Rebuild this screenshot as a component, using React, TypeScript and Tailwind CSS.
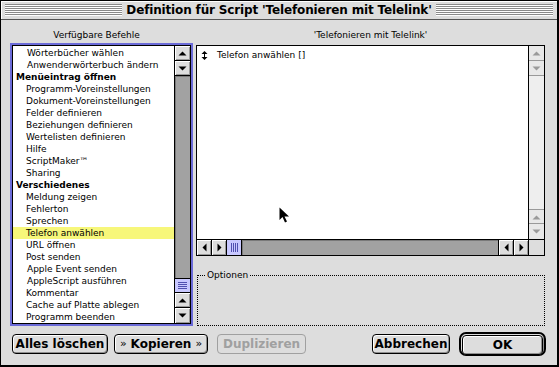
import React from 'react';

const befehle: { text: string; bold?: boolean; selected?: boolean; indent?: number }[] = [
  { text: 'Wörterbücher wählen', indent: 1 },
  { text: 'Anwenderwörterbuch ändern', indent: 1 },
  { text: 'Menüeintrag öffnen', bold: true },
  { text: 'Programm-Voreinstellungen' },
  { text: 'Dokument-Voreinstellungen' },
  { text: 'Felder definieren' },
  { text: 'Beziehungen definieren' },
  { text: 'Wertelisten definieren' },
  { text: 'Hilfe' },
  { text: 'ScriptMaker™' },
  { text: 'Sharing' },
  { text: 'Verschiedenes', bold: true },
  { text: 'Meldung zeigen' },
  { text: 'Fehlerton' },
  { text: 'Sprechen' },
  { text: 'Telefon anwählen', selected: true },
  { text: 'URL öffnen' },
  { text: 'Post senden' },
  { text: 'Apple Event senden', indent: 1 },
  { text: 'AppleScript ausführen', indent: 1 },
  { text: 'Kommentar' },
  { text: 'Cache auf Platte ablegen' },
  { text: 'Programm beenden' },
];

// kleiner Pfeil-Knopf einer Rollleiste
function Pfeil({ dir, off, cls = '' }: { dir: 'up' | 'down' | 'left' | 'right'; off?: boolean; cls?: string }) {
  const pts: Record<string, string> = {
    up: '3.5,9.5 7.5,5.5 11.5,9.5',
    down: '3.5,5.5 7.5,9.5 11.5,5.5',
    left: '9.5,3.5 5.5,7.5 9.5,11.5',
    right: '5.5,3.5 9.5,7.5 5.5,11.5',
  };
  return (
    <div
      className={`w-[15px] h-[15px] shrink-0 ${
        off ? 'bg-[#e8e8e8]' : 'bg-[#dddddd] shadow-[inset_1px_1px_0_#ffffff,inset_-1px_-1px_0_#999999]'
      } ${cls}`}
    >
      <svg width="15" height="15" viewBox="0 0 15 15">
        <polygon points={pts[dir]} fill={off ? '#9a9a9a' : '#000'} />
      </svg>
    </div>
  );
}

function Knopf({ children, off, cls = '' }: { children: React.ReactNode; off?: boolean; cls?: string }) {
  return (
    <div
      className={`h-[20px] flex items-center justify-center rounded-[4px] border text-[12px] font-bold font-['DejaVu_Sans',sans-serif] ${
        off
          ? 'border-[#a0a0a0] text-[#a0a0a0] bg-[#dddddd]'
          : 'border-black text-black bg-[#dddddd] shadow-[inset_1px_1px_0_#ffffff,inset_-1px_-1px_0_#8f8f8f]'
      } ${cls}`}
    >
      {children}
    </div>
  );
}

export default function App() {
  return (
    <div className="w-[559px] h-[367px] bg-[#dddddd] border-l border-t border-black border-r-[2px] border-b-[2px] flex flex-col relative overflow-hidden font-['DejaVu_Sans',sans-serif] text-[9px] text-black">
      {/* Titelleiste */}
      <div className="h-[19px] border-b border-[#555555] flex items-center gap-[4px] px-[4px] bg-[#dddddd] shadow-[inset_1px_1px_0_#ffffff]">
        <div className="flex-1 h-[12px] bg-[repeating-linear-gradient(to_bottom,#8a8a8a_0px,#8a8a8a_1px,#ffffff_1px,#ffffff_2px)]" />
        <div className="text-[12px] font-bold leading-[18px] tracking-[-0.15px] whitespace-nowrap">
          Definition für Script 'Telefonieren mit Telelink'
        </div>
        <div className="flex-1 h-[12px] bg-[repeating-linear-gradient(to_bottom,#8a8a8a_0px,#8a8a8a_1px,#ffffff_1px,#ffffff_2px)]" />
      </div>

      <div className="flex gap-[3px] pl-[9px] pt-[9px]">
        {/* Verfügbare Befehle */}
        <div className="w-[183px] flex flex-col">
          <div className="h-[14px] leading-[12px] text-center pr-[10px]">Verfügbare Befehle</div>
          <div className="h-[283px] border-[2px] border-[#6b6bd8] flex">
            <div className="flex-1 border border-black flex">
              <div className="flex-1 bg-white pt-[1px]">
                {befehle.map((b) => (
                  <div
                    key={b.text}
                    className={`h-[12px] leading-[12px] whitespace-nowrap ${
                      b.bold ? 'font-bold pl-[3px]' : b.indent ? 'pl-[14px]' : 'pl-[13px]'
                    } ${b.selected ? 'bg-[#f7f77a]' : ''}`}
                  >
                    {b.text}
                  </div>
                ))}
              </div>
              <div className="w-[16px] border-l border-black flex flex-col">
                <Pfeil dir="up" cls="border-b border-black" />
                <Pfeil dir="down" cls="border-b border-black" />
                <div className="flex-1 bg-[#a2a2a2] shadow-[inset_1px_1px_0_#7a7a7a]" />
                <div className="h-[15px] border-y border-black bg-[#c8c8ff] flex flex-col justify-center items-center gap-[1px]">
                  {[0, 1, 2, 3].map((i) => (
                    <div key={i} className="w-[9px] h-[1px] bg-[#5050b0]" />
                  ))}
                </div>
                <Pfeil dir="up" cls="border-b border-black" />
                <Pfeil dir="down" />
              </div>
            </div>
          </div>
        </div>

        {/* Script-Inhalt */}
        <div className="w-[349px] flex flex-col">
          <div className="h-[16px] leading-[12px] text-center">'Telefonieren mit Telelink'</div>
          <div className="h-[211px] border border-black flex flex-col">
            <div className="flex-1 flex min-h-0">
              <div className="flex-1 bg-white pt-[3px] pl-[4px]">
                <div className="h-[12px] leading-[12px] flex items-center">
                  <svg width="7" height="9" viewBox="0 0 7 9" className="mr-[9px]">
                    <polygon points="3.5,0 6.5,3 0.5,3" fill="#000" />
                    <rect x="3" y="3" width="1" height="3" fill="#000" />
                    <polygon points="3.5,9 6.5,6 0.5,6" fill="#000" />
                  </svg>
                  <span>Telefon anwählen []</span>
                </div>
              </div>
              <div className="w-[16px] border-l border-black flex flex-col bg-[#ececec]">
                <Pfeil dir="up" off cls="border-b border-[#999999]" />
                <Pfeil dir="down" off cls="border-b border-[#999999]" />
                <div className="flex-1 bg-[#eeeeee]" />
                <Pfeil dir="up" off cls="border-t border-b border-[#999999]" />
                <Pfeil dir="down" off />
              </div>
            </div>
            <div className="h-[16px] border-t border-black flex">
              <Pfeil dir="left" cls="border-r border-black" />
              <Pfeil dir="right" cls="border-r border-black" />
              <div className="w-[15px] border-r border-black bg-[#c8c8ff] flex justify-center items-center gap-[1px]">
                {[0, 1, 2, 3].map((i) => (
                  <div key={i} className="h-[9px] w-[1px] bg-[#5050b0]" />
                ))}
              </div>
              <div className="flex-1 bg-[#a2a2a2] shadow-[inset_1px_1px_0_#7a7a7a] border-r border-black" />
              <Pfeil dir="left" cls="border-r border-black" />
              <Pfeil dir="right" cls="border-r border-black" />
              <div className="w-[15px] bg-[#dddddd]" />
            </div>
          </div>
          {/* Optionen */}
          <div className="relative mt-[19px] ml-[1px] h-[51px] border border-dotted border-black">
            <span className="absolute left-[8px] top-[-7px] bg-[#dddddd] px-[1px] leading-[12px]">Optionen</span>
          </div>
        </div>
      </div>

      {/* Knöpfe */}
      <div className="flex items-center mt-[6px] h-[24px] pl-[11px] pr-[11px]">
        <Knopf cls="w-[96px]">Alles löschen</Knopf>
        <Knopf cls="w-[94px] ml-[6px]">
          <span className="font-normal text-[11px] mr-[4px]">»</span>Kopieren
          <span className="font-normal text-[11px] ml-[4px]">»</span>
        </Knopf>
        <Knopf off cls="w-[89px] ml-[9px]">Duplizieren</Knopf>
        <Knopf cls="w-[78px] ml-auto">Abbrechen</Knopf>
        <div className="ml-[9px] w-[87px] h-[24px] rounded-[7px] border-[2px] border-black p-[1px] bg-[#dddddd] shadow-[inset_-1px_-1px_0_#8f8f8f]">
          <Knopf cls="h-[18px]">OK</Knopf>
        </div>
      </div>

      {/* Mauszeiger */}
      <svg className="absolute left-[278px] top-[206px]" width="11" height="17" viewBox="0 0 11 17">
        <polygon points="0.5,0.5 0.5,13 3.5,10 6,15.5 8,14.5 5.5,9.5 10,9.5" fill="#000" />
      </svg>
    </div>
  );
}
